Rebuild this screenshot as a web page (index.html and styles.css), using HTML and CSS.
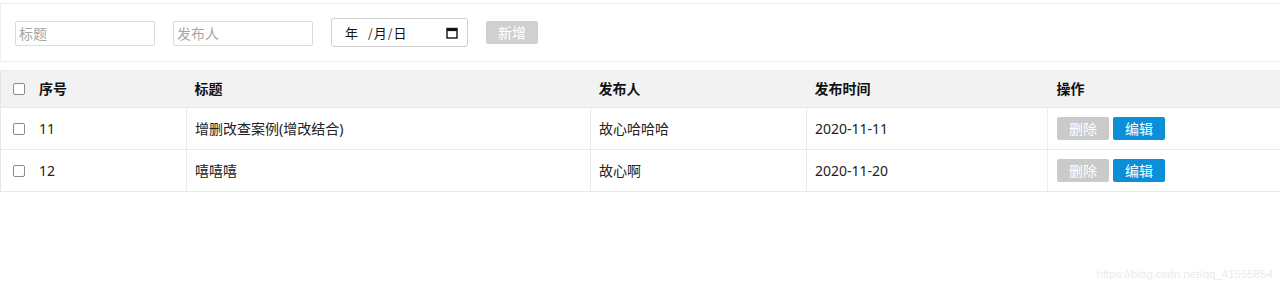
FILE: index.html
```html
<!DOCTYPE html>
<html lang="zh">
<head>
<meta charset="utf-8">
<link rel="stylesheet" href="styles.css">
</head>
<body>
<div class="toolbar">
  <input class="txt" type="text" placeholder="标题">
  <input class="txt" type="text" placeholder="发布人">
  <div class="date">
    <span class="date-text"><span class="seg-y">年</span><span class="sl">/</span>月<span class="sl">/</span>日</span>
    <svg class="cal" width="12" height="12" viewBox="0 0 12 12"><rect x="1" y="1.5" width="10" height="9.5" fill="none" stroke="#111" stroke-width="1.4"/><rect x="1" y="1.5" width="10" height="2.6" fill="#111"/></svg>
  </div>
  <button class="btn btn-gray btn-add">新增</button>
</div>

<table class="grid">
  <thead>
    <tr>
      <th class="c1"><span class="cb"></span>序号</th>
      <th class="c2">标题</th>
      <th class="c3">发布人</th>
      <th class="c4">发布时间</th>
      <th class="c5">操作</th>
    </tr>
  </thead>
  <tbody>
    <tr>
      <td class="c1"><span class="cb"></span>11</td>
      <td>增删改查案例(增改结合)</td>
      <td>故心哈哈哈</td>
      <td>2020-11-11</td>
      <td><button class="btn btn-gray">删除</button><button class="btn btn-blue">编辑</button></td>
    </tr>
    <tr>
      <td class="c1"><span class="cb"></span>12</td>
      <td>嘻嘻嘻</td>
      <td>故心啊</td>
      <td>2020-11-20</td>
      <td><button class="btn btn-gray">删除</button><button class="btn btn-blue">编辑</button></td>
    </tr>
  </tbody>
</table>

<div class="watermark">https://blog.csdn.net/qq_41555854</div>
</body>
</html>
```

FILE: styles.css
```css
* { box-sizing: border-box; }
html, body {
  margin: 0;
  padding: 0;
  background: #fff;
  font-family: "Noto Sans", "Noto Sans CJK SC", sans-serif;
  font-size: 14px;
  color: #222;
}
body { position: relative; height: 290px; overflow: hidden; }

.toolbar {
  margin-top: 3px;
  height: 59px;
  border: 1px solid #eeeeee;
  border-right: none;
  display: flex;
  align-items: center;
  padding-left: 14px;
  gap: 18px;
}
.txt {
  width: 140px;
  height: 25px;
  border: 1px solid #dcdcdc;
  border-radius: 2px;
  padding: 0 3px;
  font-family: "Noto Sans CJK SC", sans-serif;
  font-size: 14px;
  outline: none;
  margin-top: 1px;
}
.txt::placeholder { color: #a5a5a5; }

.date {
  width: 137px;
  height: 29px;
  border: 1px solid #cfcfcf;
  border-radius: 3px;
  display: flex;
  align-items: center;
  justify-content: space-between;
  padding: 0 9px 0 13px;
  font-family: "Noto Sans CJK SC", sans-serif;
  font-size: 13px;
  color: #111;
}
.seg-y { margin-right: 9px; }
.sl { margin: 0 1px; font-size: 12px; }
.cal { display: block; }

.btn {
  width: 52px;
  height: 23px;
  border: none;
  border-radius: 2px;
  color: #fff;
  font-family: "Noto Sans CJK SC", sans-serif;
  font-size: 14px;
  padding: 0;
  line-height: 23px;
  cursor: pointer;
}
.btn-gray { background: #cacaca; }
.btn-blue { background: #0a8fd8; margin-left: 4px; }
.btn-add { background: #d0d0d0; }

.grid {
  margin-top: 8px;
  width: 100%;
  border-collapse: collapse;
  table-layout: fixed;
  border-left: 1px solid #e6e6e6;
}
.grid th {
  background: #f2f2f2;
  height: 37px;
  text-align: left;
  font-weight: bold;
  padding: 0 0 2px 8px;
  border-top: 1px solid #ececec;
  color: #111;
}
.grid td {
  height: 42px;
  padding: 0 0 1px 8px;
  border-top: 1px solid #e9e9e9;
  border-bottom: 1px solid #e9e9e9;
  border-left: 1px solid #ececec;
  white-space: nowrap;
}
.grid td:first-child { border-left: none; }
.grid .c1 { width: 186px; padding-left: 12px; }
.grid .c2 { width: 404px; }
.grid .c3 { width: 216px; }
.grid .c4 { width: 241px; }
.grid th.c5, .grid td:last-child { padding-left: 9px; }

.cb {
  display: inline-block;
  width: 12px;
  height: 12px;
  border: 1px solid #8a8a8a;
  border-radius: 2px;
  vertical-align: -1px;
  margin-right: 14px;
  background: #fff;
}

.watermark {
  position: absolute;
  right: 7px;
  top: 268px;
  font-family: "Liberation Sans", Arial, sans-serif;
  font-size: 11.5px;
  color: #ebebeb;
}
```
